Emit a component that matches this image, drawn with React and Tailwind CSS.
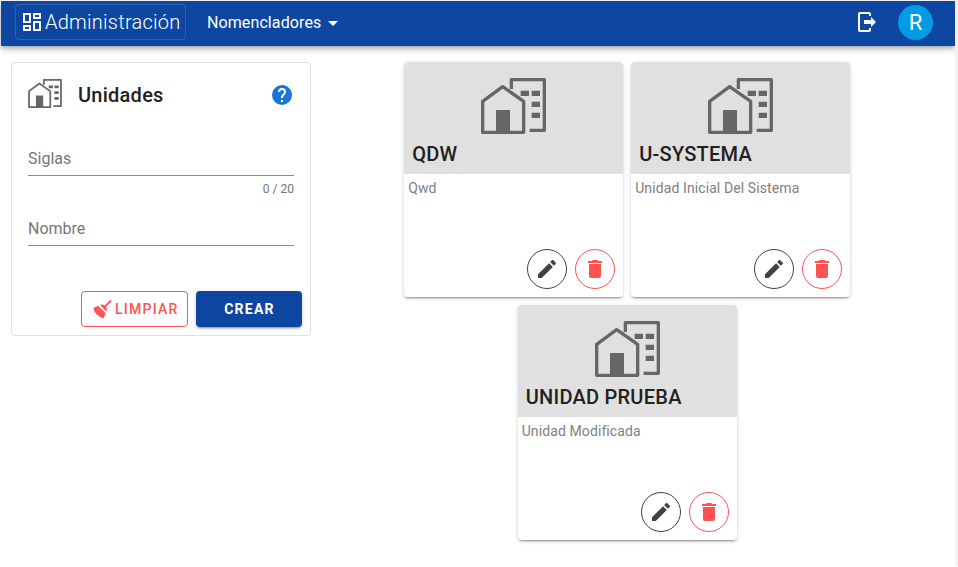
import React from 'react';

const paths = {
  dashboard:
    'M19,5V7H15V5H19M9,5V11H5V5H9M19,13V19H15V13H19M9,17V19H5V17H9M21,3H13V9H21V3M11,3H3V13H11V3M21,11H13V21H21V11M11,15H3V21H11V15Z',
  menuDown: 'M7,10L12,15L17,10H7Z',
  logout:
    'M16,17V14H9V10H16V7L21,12L16,17M14,2A2,2 0 0,1 16,4V6H14V4H5V20H14V18H16V20A2,2 0 0,1 14,22H5A2,2 0 0,1 3,20V4A2,2 0 0,1 5,2H14Z',
  help:
    'M15.07,11.25L14.17,12.17C13.45,12.89 13,13.5 13,15H11V14.5C11,13.39 11.45,12.39 12.17,11.67L13.41,10.41C13.78,10.05 14,9.55 14,9C14,7.89 13.1,7 12,7A2,2 0 0,0 10,9H8A4,4 0 0,1 12,5A4,4 0 0,1 16,9C16,9.88 15.64,10.67 15.07,11.25M13,19H11V17H13M12,2A10,10 0 0,0 2,12A10,10 0 0,0 12,22A10,10 0 0,0 22,12C22,6.47 17.5,2 12,2Z',
  broom:
    'M19.36,2.72L20.78,4.14L15.06,9.85C16.13,11.39 16.28,13.24 15.38,14.44L9.06,8.12C10.26,7.22 12.11,7.37 13.65,8.44L19.36,2.72M5.93,17.57C3.92,15.56 2.69,13.16 2.35,10.92L7.23,8.83L14.67,16.27L12.58,21.15C10.34,20.81 7.94,19.58 5.93,17.57Z',
  pencil:
    'M20.71,7.04C21.1,6.65 21.1,6 20.71,5.63L18.37,3.29C18,2.9 17.35,2.9 16.96,3.29L15.12,5.12L18.87,8.87M3,17.25V21H6.75L17.81,9.93L14.06,6.18L3,17.25Z',
  trash:
    'M19,4H15.5L14.5,3H9.5L8.5,4H5V6H19M6,19A2,2 0 0,0 8,21H16A2,2 0 0,0 18,19V7H6V19Z',
};

function Icon({ name, className = 'size-6' }) {
  return (
    <svg viewBox="0 0 24 24" fill="currentColor" className={`shrink-0 ${className}`}>
      <path d={paths[name]} />
    </svg>
  );
}

function UnitsIcon({ className }) {
  return (
    <svg viewBox="0 0 195 168" className={`shrink-0 text-[#666] ${className}`}>
      <g fill="none" stroke="currentColor" strokeWidth="10" strokeLinejoin="round">
        <path d="M91 33V5H190V157H146" />
        <path d="M5 163V70L65 26L128 70V163Z" />
      </g>
      <path
        fill="currentColor"
        d="M45 96H87V163H45ZM119 38H144V54H119ZM152 38H177V54H152ZM152 71H177V87H152ZM152 104H177V120H152Z"
      />
    </svg>
  );
}

function Navbar() {
  return (
    <header className="flex h-[45px] shrink-0 items-center bg-[#0d47a1] pl-3.5 pr-[22px] text-white shadow-[0_2px_4px_-1px_rgba(0,0,0,.2),0_4px_5px_rgba(0,0,0,.14),0_1px_10px_rgba(0,0,0,.12)]">
      <div className="mb-[3px] flex h-[36px] w-[171px] items-center rounded border border-white/15 pl-1">
        <Icon name="dashboard" className="size-6" />
        <span className="pl-px text-[20px] font-light tracking-[.25px]">Administración</span>
      </div>
      <div className="mb-px ml-[21px] flex items-center">
        <span className="text-[16px] tracking-[.1px]">Nomencladores</span>
        <Icon name="menuDown" />
      </div>
      <Icon name="logout" className="mb-[3px] ml-auto size-6" />
      <div className="mb-0.5 ml-[19px] flex size-[35px] items-center justify-center rounded-full bg-[#039be5] text-[22px]">R</div>
    </header>
  );
}

function Field({ label, counter }) {
  return (
    <div className="h-[70px]">
      <div className="h-[29px] border-b border-[#8c8c8c] text-[16px] leading-6 text-[#767676]">{label}</div>
      {counter && <div className="pt-[7px] text-right text-[12px] leading-3 text-[#767676]">{counter}</div>}
    </div>
  );
}

function UnitForm() {
  return (
    <section className="h-[274px] w-[300px] rounded border border-[#dfdfdf] bg-white pr-2">
      <div className="flex items-center pl-4 pr-2 pt-4">
        <UnitsIcon className="mb-[3px] h-[29px] w-[34px]" />
        <h1 className="ml-4 text-[20px] font-medium leading-8 tracking-[.25px]">Unidades</h1>
        <Icon name="help" className="ml-auto size-6 text-[#1976d2]" />
      </div>
      <div className="pl-4 pr-2 pt-9">
        <Field label="Siglas" counter="0 / 20" />
        <Field label="Nombre" />
      </div>
      <div className="mt-1 flex justify-end gap-2 text-[14px] tracking-[1.25px]">
        <button className="flex h-9 w-[107px] items-center rounded border border-[#ff5252] pl-[9px] font-medium text-[#ff5252]">
          <Icon name="broom" />
          LIMPIAR
        </button>
        <button className="h-9 w-[106px] rounded bg-[#0d47a1] pl-px font-bold text-white shadow-[0_3px_1px_-2px_rgba(0,0,0,.2),0_2px_2px_rgba(0,0,0,.14),0_1px_5px_rgba(0,0,0,.12)]">
          CREAR
        </button>
      </div>
    </section>
  );
}

function UnitCard({ code, name }) {
  return (
    <article className="flex h-[235px] w-[219px] flex-col overflow-hidden rounded bg-white shadow-[0_3px_1px_-2px_rgba(0,0,0,.2),0_2px_2px_rgba(0,0,0,.14),0_1px_5px_rgba(0,0,0,.12)]">
      <div className="flex h-28 flex-col items-center bg-[#e0e0e0] pt-4">
        <UnitsIcon className="h-14 w-[65px]" />
        <h2 className="self-stretch pl-2 pt-1 text-[20px] font-medium leading-8 tracking-[.25px]">{code}</h2>
      </div>
      <p className="px-1 pt-[3px] text-[14px] leading-[22px] tracking-[.1px] text-[#808080]">{name}</p>
      <div className="mt-auto flex justify-end gap-2 p-2">
        <button className="flex size-10 items-center justify-center rounded-full border border-[#424242] text-[#424242]">
          <Icon name="pencil" />
        </button>
        <button className="flex size-10 items-center justify-center rounded-full border border-[#ff5252] text-[#ff5252]">
          <Icon name="trash" />
        </button>
      </div>
    </article>
  );
}

const units = [
  { code: 'QDW', name: 'Qwd' },
  { code: 'U-SYSTEMA', name: 'Unidad Inicial Del Sistema' },
  { code: 'UNIDAD PRUEBA', name: 'Unidad Modificada' },
];

export default function App() {
  return (
    <div className="flex h-[567px] w-[958px] overflow-hidden bg-white pl-px pt-px font-[Roboto,sans-serif] text-[#212121]">
      <div className="flex w-[954px] shrink-0 flex-col">
        <Navbar />
        <main className="flex items-start pl-2.5 pt-4">
          <UnitForm />
          <div className="ml-[93.2px] flex w-[446px] flex-wrap justify-center gap-2">
            {units.map((unit) => (
              <UnitCard key={unit.code} {...unit} />
            ))}
          </div>
        </main>
      </div>
      <div className="mb-px w-[3px] bg-[#f1f1f1]" />
    </div>
  );
}
